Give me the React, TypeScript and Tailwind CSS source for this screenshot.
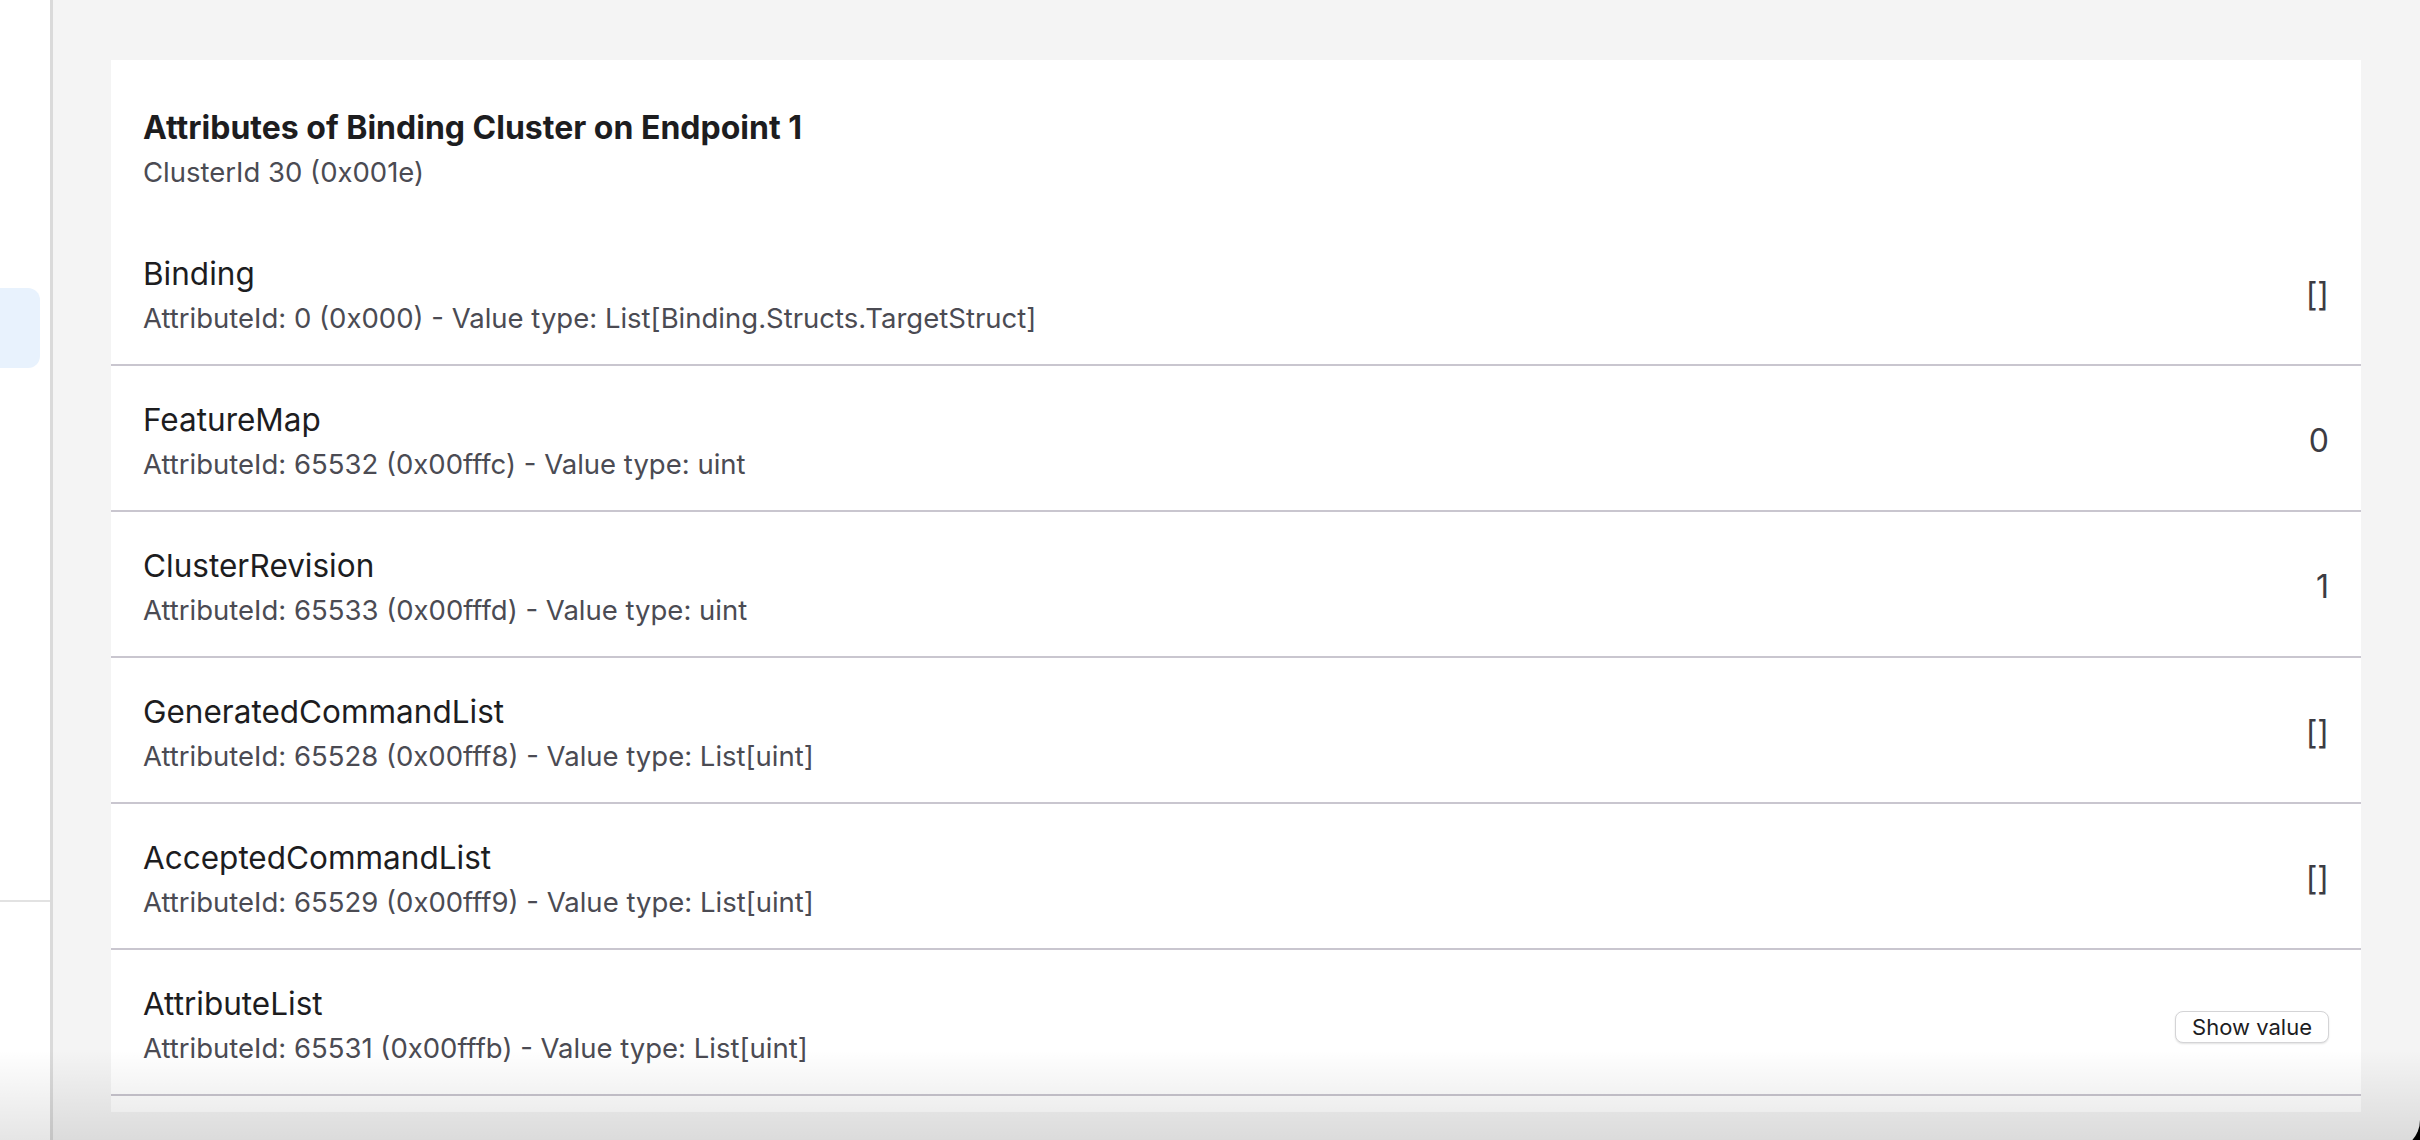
import React from 'react';

interface Attribute {
  name: string;
  id: number;
  hex: string;
  type: string;
  value?: string;
}

const attributes: Attribute[] = [
  { name: 'Binding', id: 0, hex: '0x000', type: 'List[Binding.Structs.TargetStruct]', value: '[]' },
  { name: 'FeatureMap', id: 65532, hex: '0x00fffc', type: 'uint', value: '0' },
  { name: 'ClusterRevision', id: 65533, hex: '0x00fffd', type: 'uint', value: '1' },
  { name: 'GeneratedCommandList', id: 65528, hex: '0x00fff8', type: 'List[uint]', value: '[]' },
  { name: 'AcceptedCommandList', id: 65529, hex: '0x00fff9', type: 'List[uint]', value: '[]' },
  { name: 'AttributeList', id: 65531, hex: '0x00fffb', type: 'List[uint]' },
];

function AttributeRow({ attr }: { attr: Attribute }) {
  return (
    <div className="flex items-center h-[146px] shrink-0 border-b-2 border-[#c9c6cf] px-8 pt-[6px]">
      <div className="flex-1 min-w-0 flex flex-col gap-[6px]">
        <div className="text-[31.5px] leading-[40px] text-[#1d1d1f]">{attr.name}</div>
        <div className="text-[27.5px] leading-[36px] text-[#4b4b53]">
          AttributeId: {attr.id} ({attr.hex}) - Value type: {attr.type}
        </div>
      </div>
      {attr.value !== undefined ? (
        <div className="text-[32px] leading-[40px] text-[#3c3c43]">{attr.value}</div>
      ) : (
        <button className="mt-[4px] h-[32px] px-[16px] rounded-[8px] border border-[#d4d4d6] bg-white text-[22px] leading-[28px] text-[#1d1d1f] shadow-[0_1px_2px_rgba(0,0,0,0.12)]">
          Show value
        </button>
      )}
    </div>
  );
}

export default function App() {
  return (
    <div
      className="relative flex w-[2420px] h-[1140px] overflow-hidden bg-[#f4f4f4]"
      style={{ fontFamily: 'Inter, "Noto Sans", sans-serif' }}
    >
      {/* Sidebar */}
      <aside className="w-[53px] shrink-0 bg-white border-r-[3px] border-[#dadada] flex flex-col">
        <div className="h-[288px]" />
        <div className="h-[80px] w-[40px] rounded-r-[12px] bg-[#e8f2fd]" />
        <div className="h-[532px]" />
        <div className="h-[2px] bg-[#e2e2e2]" />
      </aside>

      {/* Main */}
      <main className="flex-1 min-w-0 pl-[58px] pr-[59px] pt-[60px]">
        <div className="h-[1052px] bg-white overflow-hidden flex flex-col">
          <div className="h-[160px] shrink-0 px-8 pt-[50px]">
            <div className="text-[32px] leading-[36px] font-bold text-[#1d1d1f]">
              Attributes of Binding Cluster on Endpoint 1
            </div>
            <div className="mt-[8px] text-[27.5px] leading-[36px] text-[#4b4b53]">ClusterId 30 (0x001e)</div>
          </div>
          {attributes.map((a) => (
            <AttributeRow key={a.name} attr={a} />
          ))}
        </div>
      </main>

      {/* Bottom window fade */}
      <div className="pointer-events-none absolute left-0 right-0 bottom-0 h-[90px] bg-gradient-to-b from-transparent to-[rgba(0,0,0,0.1)]" />

      {/* Window corner */}
      <div className="pointer-events-none absolute right-0 bottom-0 w-[60px] h-[60px] overflow-hidden">
        <div className="absolute right-0 bottom-[-10px] w-[400px] h-[400px] rounded-br-[30px] shadow-[0_0_0_40px_#000]" />
      </div>
    </div>
  );
}
